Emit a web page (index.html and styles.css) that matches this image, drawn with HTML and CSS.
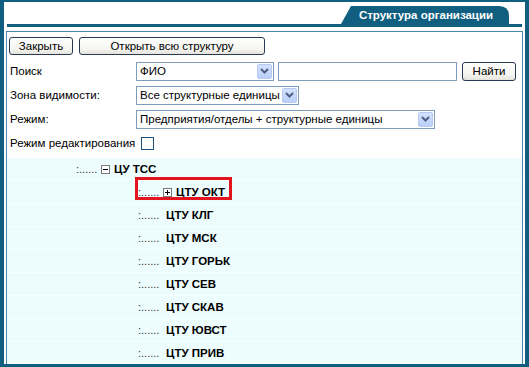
FILE: index.html
```html
<!DOCTYPE html>
<html lang="ru">
<head>
<meta charset="utf-8">
<title>Структура организации</title>
<link rel="stylesheet" href="styles.css">
</head>
<body>
<div class="frame">
  <div class="header">
    <div class="tab">Структура организации</div>
  </div>
  <div class="header-line"></div>
  <div class="panel">
    <div class="form">
      <div class="btn-row">
        <button class="btn btn-close">Закрыть</button>
        <button class="btn btn-open">Открыть всю структуру</button>
      </div>
      <div class="frow">
        <span class="label">Поиск</span>
        <div class="select sel-fio"><span class="sel-text">ФИО</span><span class="sel-arrow"><svg width="9" height="6" viewBox="0 0 9 6"><path d="M1 1 L4.5 4.5 L8 1" fill="none" stroke="#4d6185" stroke-width="2"/></svg></span></div>
        <div class="input"></div>
        <button class="btn btn-find">Найти</button>
      </div>
      <div class="frow">
        <span class="label">Зона видимости:</span>
        <div class="select sel-zone"><span class="sel-text">Все структурные единицы</span><span class="sel-arrow"><svg width="9" height="6" viewBox="0 0 9 6"><path d="M1 1 L4.5 4.5 L8 1" fill="none" stroke="#4d6185" stroke-width="2"/></svg></span></div>
      </div>
      <div class="frow">
        <span class="label">Режим:</span>
        <div class="select sel-mode"><span class="sel-text">Предприятия/отделы + структурные единицы</span><span class="sel-arrow"><svg width="9" height="6" viewBox="0 0 9 6"><path d="M1 1 L4.5 4.5 L8 1" fill="none" stroke="#4d6185" stroke-width="2"/></svg></span></div>
      </div>
      <div class="frow">
        <span class="label">Режим редактирования</span>
        <span class="checkbox"></span>
      </div>
    </div>
    <div class="tree">
      <div class="trow lvl1"><span class="dots">:......</span><span class="exp"><svg width="9" height="9" viewBox="0 0 9 9"><rect x="0.5" y="0.5" width="8" height="8" fill="#fff" stroke="#7a7a7a"/><path d="M2 4.5 H7" stroke="#000"/></svg></span><span class="name">ЦУ ТСС</span></div>
      <div class="trow lvl2"><span class="node sel"><span class="dots">:......</span><span class="exp"><svg width="9" height="9" viewBox="0 0 9 9"><rect x="0.5" y="0.5" width="8" height="8" fill="#fff" stroke="#7a7a7a"/><path d="M2 4.5 H7 M4.5 2 V7" stroke="#000"/></svg></span><span class="name">ЦТУ ОКТ</span></span></div>
      <div class="trow lvl2"><span class="dots">:......</span><span class="name leaf">ЦТУ КЛГ</span></div>
      <div class="trow lvl2"><span class="dots">:......</span><span class="name leaf">ЦТУ МСК</span></div>
      <div class="trow lvl2"><span class="dots">:......</span><span class="name leaf">ЦТУ ГОРЬК</span></div>
      <div class="trow lvl2"><span class="dots">:......</span><span class="name leaf">ЦТУ СЕВ</span></div>
      <div class="trow lvl2"><span class="dots">:......</span><span class="name leaf">ЦТУ СКАВ</span></div>
      <div class="trow lvl2"><span class="dots">:......</span><span class="name leaf">ЦТУ ЮВСТ</span></div>
      <div class="trow lvl2"><span class="dots">:......</span><span class="name leaf">ЦТУ ПРИВ</span></div>
    </div>
  </div>
</div>
</body>
</html>
```
FILE: styles.css
```css
html, body {
  margin: 0;
  padding: 0;
  background: #fff;
}
body {
  font-family: "Liberation Sans", Arial, sans-serif;
  font-size: 11px;
  color: #000;
}
.frame {
  width: 529px;
  height: 367px;
  box-sizing: border-box;
  border-style: solid;
  border-color: #105e80;
  border-width: 2px 4px 3px 4px;
  padding: 0 2px;
  display: flex;
  flex-direction: column;
  overflow: hidden;
  background: #fff;
}
.header {
  height: 22px;
  display: flex;
  justify-content: flex-end;
  align-items: flex-end;
  padding-right: 14px;
}
.tab {
  width: 168px;
  height: 18px;
  background: #105e80;
  clip-path: path('M10 0 H158 Q168 0 168 10 V18 H0 Z');
  color: #fff;
  font-weight: bold;
  font-size: 11.5px;
  line-height: 19px;
  text-align: center;
  padding-left: 2px;
  box-sizing: border-box;
}
.header-line {
  height: 3px;
  background: #105e80;
  margin: 0 1px 4px 1px;
}
.panel {
  flex: 1;
  border: 1px solid #4b87b0;
  border-bottom: 0;
  display: flex;
  flex-direction: column;
  overflow: hidden;
}
.form {
  padding: 5px 2px 0 2px;
}
.btn {
  font-family: "Liberation Sans", Arial, sans-serif;
  font-size: 11.5px;
  color: #000;
  height: 18px;
  padding: 0;
  border: 1px solid #2a3a55;
  border-radius: 3px;
  background: linear-gradient(#ffffff, #f4f4f0 70%, #e4e2da);
  box-sizing: border-box;
  line-height: 16px;
}
.btn-row {
  display: flex;
  gap: 6px;
  margin-bottom: 4px;
}
.btn-close { width: 64px; }
.btn-open { width: 186px; }
.frow {
  height: 24px;
  display: flex;
  align-items: center;
}
.label {
  width: 127px;
  padding-left: 1px;
  box-sizing: border-box;
  flex: none;
  white-space: nowrap;
  font-size: 11.5px;
}
.select {
  height: 19px;
  box-sizing: border-box;
  border: 1px solid #7f9db9;
  background: #fff;
  display: flex;
  align-items: center;
  justify-content: space-between;
  padding: 0 1px 0 3px;
  font-size: 11.5px;
}
.sel-text { white-space: nowrap; }
.sel-arrow {
  width: 15px;
  height: 15px;
  flex: none;
  box-sizing: border-box;
  border: 1px solid #b6c9f5;
  border-radius: 2px;
  background: linear-gradient(#d4e1fd, #bccffa);
  display: flex;
  align-items: center;
  justify-content: center;
}
.sel-fio { width: 138px; }
.sel-zone { width: 163px; }
.sel-mode { width: 299px; }
.input {
  width: 179px;
  height: 19px;
  box-sizing: border-box;
  border: 1px solid #7f9db9;
  margin-left: 4px;
  background: #fff;
}
.btn-find {
  width: 54px;
  margin-left: 5px;
  height: 19px;
}
.checkbox {
  width: 13px;
  height: 13px;
  box-sizing: border-box;
  border: 1px solid #1c5180;
  background: #fff;
  margin-left: 5px;
}
.tree {
  margin-top: 3px;
  flex: 1;
  background: #edfcfd;
}
.trow {
  height: 23px;
  box-sizing: border-box;
  border-bottom: 1px solid #f9ffff;
  display: flex;
  align-items: center;
  font-size: 11px;
}
.node {
  display: flex;
  align-items: center;
  position: relative;
}
.node.sel::after {
  content: "";
  position: absolute;
  left: -3px;
  top: -9px;
  width: 97px;
  height: 23px;
  box-sizing: border-box;
  border: 3px solid #e3141e;
}
.lvl1 { padding-left: 69px; }
.lvl2 { padding-left: 131px; }
.dots {
  color: #333;
  font-size: 11px;
  width: 22px;
}
.exp {
  display: flex;
  margin-left: 3px;
  width: 9px;
  height: 9px;
}
.name {
  font-weight: bold;
  font-size: 11.5px;
  margin-left: 4px;
}
.name.leaf { margin-left: 6px; }
```
